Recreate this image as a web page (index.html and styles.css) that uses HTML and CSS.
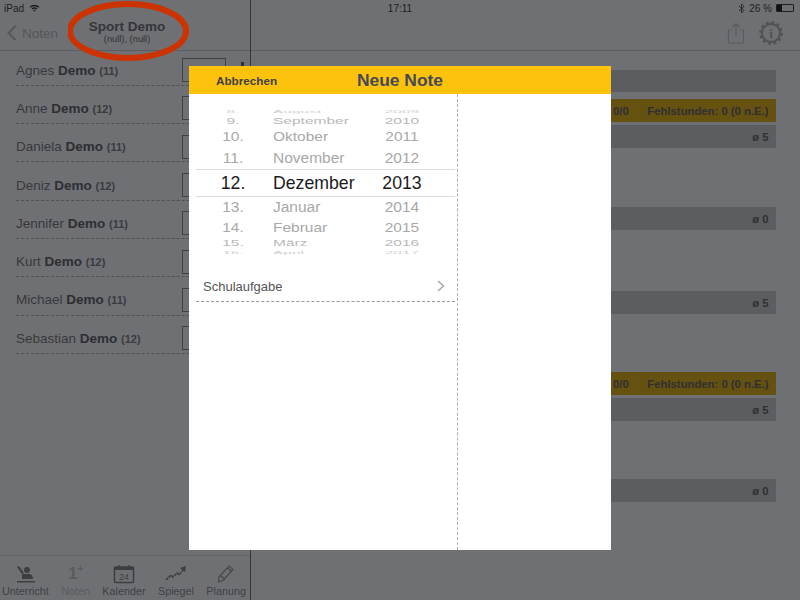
FILE: index.html
```html
<!DOCTYPE html>
<html lang="de">
<head>
  <meta charset="UTF-8" />
  <title>Neue Note</title>
  <link rel="stylesheet" href="styles.css">
</head>
<body>

<div class="screen">
  <div class="main">
    <div class="left">
      <div class="navbar">
        <div class="back">
          <svg width="10" height="16" viewBox="0 0 10 16"><path d="M8.5 1 L1.5 8 L8.5 15" fill="none" stroke="#55565a" stroke-width="2"/></svg>
          <span>Noten</span>
        </div>
        <div class="nav-title">
          <div class="nav-title-main">Sport Demo</div>
          <div class="nav-title-sub">(null), (null)</div>
        </div>
      </div>

      <div class="students">
        <div class="student"><span>Agnes <b>Demo</b> <small>(11)</small></span><div class="grade-box"></div></div>
        <div class="student"><span>Anne <b>Demo</b> <small>(12)</small></span><div class="grade-box"></div></div>
        <div class="student"><span>Daniela <b>Demo</b> <small>(11)</small></span><div class="grade-box"></div></div>
        <div class="student"><span>Deniz <b>Demo</b> <small>(12)</small></span><div class="grade-box"></div></div>
        <div class="student"><span>Jennifer <b>Demo</b> <small>(11)</small></span><div class="grade-box"></div></div>
        <div class="student"><span>Kurt <b>Demo</b> <small>(12)</small></span><div class="grade-box"></div></div>
        <div class="student"><span>Michael <b>Demo</b> <small>(11)</small></span><div class="grade-box"></div></div>
        <div class="student"><span>Sebastian <b>Demo</b> <small>(12)</small></span><div class="grade-box"></div></div>
      </div>

      <div class="tabbar">
        <div class="tab">
          <svg width="24" height="20" viewBox="0 0 24 20"><path d="M4 3 L6 2 L11 9 L9 10 Z M9 10 L17 10 Q20 11 20 15 H9 Z M4 17 H22 V18.5 H4 Z" fill="#3d3e42"/><circle cx="14" cy="6" r="3" fill="#3d3e42"/></svg>
          <span>Unterricht</span>
        </div>
        <div class="tab tab-off">
          <div class="one-plus">1<sup>+</sup></div>
          <span>Noten</span>
        </div>
        <div class="tab">
          <svg width="22" height="20" viewBox="0 0 22 20"><rect x="1.5" y="3" width="19" height="15.5" rx="1" fill="none" stroke="#3d3e42" stroke-width="1.5"/><rect x="1.5" y="3" width="19" height="3" fill="#3d3e42"/><path d="M6 1 V4 M16 1 V4" stroke="#3d3e42" stroke-width="1.5"/><text x="11" y="15.5" font-size="9" font-family="Liberation Sans" text-anchor="middle" fill="#3d3e42">24</text></svg>
          <span>Kalender</span>
        </div>
        <div class="tab">
          <svg width="22" height="20" viewBox="0 0 22 20"><path d="M1 16 L6 11 L8 13 L12 9 L14 11 L19 5" fill="none" stroke="#3d3e42" stroke-width="1.6" stroke-dasharray="3 0.8"/><path d="M15 4 L21 2 L20 8 Z" fill="#3d3e42"/></svg>
          <span>Spiegel</span>
        </div>
        <div class="tab">
          <svg width="20" height="20" viewBox="0 0 20 20"><path d="M3 13 L13 2 L17 5.5 L7 16.5 L2.5 18 Z M11.5 4 L15.5 7.5 M5 12 L9 15.5" fill="none" stroke="#47484c" stroke-width="1.2"/></svg>
          <span>Planung</span>
        </div>
      </div>
    </div>

    <div class="right">
      <div class="navbar navbar-right">
        <svg width="18" height="22" viewBox="0 0 18 22"><path d="M5.5 8 H1.5 V21 H16.5 V8 H12.5 M9 14 V1.5 M5.5 5 L9 1.5 L12.5 5" fill="none" stroke="#5b5c60" stroke-width="1.2"/></svg>
        <svg width="24" height="24" viewBox="0 0 24 24"><circle cx="12" cy="12" r="9" fill="none" stroke="#505155" stroke-width="2"/><circle cx="12" cy="12" r="10.8" fill="none" stroke="#505155" stroke-width="2" stroke-dasharray="3 2.65"/><text x="12" y="17" font-size="13" font-family="Liberation Serif" font-weight="bold" text-anchor="middle" fill="#505155">i</text></svg>
      </div>
      <div class="course-list">
        <div class="bar bar-first"></div>
        <div class="bar bar-gold"><span>0/0</span><span>Fehlstunden: 0 (0 n.E.)</span></div>
        <div class="bar">ø 5</div>
        <div class="bar bar-gap1">ø 0</div>
        <div class="bar bar-gap2">ø 5</div>
        <div class="bar bar-gold bar-gap3"><span>0/0</span><span>Fehlstunden: 0 (0 n.E.)</span></div>
        <div class="bar">ø 5</div>
        <div class="bar bar-gap3">ø 0</div>
      </div>
    </div>
  </div>

  <div class="statusbar">
    <div class="status-left">
      <span>iPad</span>
      <svg class="wifi" width="11" height="8" viewBox="0 0 12 9"><path d="M0.5 3 A8 8 0 0 1 11.5 3 L10.3 4.3 A6.2 6.2 0 0 0 1.7 4.3 Z M2.6 5.1 A5 5 0 0 1 9.4 5.1 L8.2 6.3 A3.3 3.3 0 0 0 3.8 6.3 Z M4.6 7.1 A2 2 0 0 1 7.4 7.1 L6 8.6 Z" fill="#1d1e20"/></svg>
    </div>
    <div class="status-time">17:11</div>
    <div class="status-right">
      <svg width="7" height="11" viewBox="0 0 7 11"><path d="M1 3 L6 7.5 L3.5 10 V1 L6 3.5 L1 8" fill="none" stroke="#2c2d30" stroke-width="1"/></svg>
      <span>26 %</span>
      <div class="battery"><div class="battery-level"></div></div>
    </div>
  </div>

  <!-- annotation drawn on the screenshot -->
  <svg class="ring" width="124" height="66" viewBox="0 0 124 66"><ellipse cx="60" cy="31" rx="58" ry="27" fill="none" stroke="#cc3300" stroke-width="6"/></svg>
  <div class="dot"></div>

  <div class="modal">
    <div class="modal-head">
      <div class="modal-cancel">Abbrechen</div>
      <div class="modal-title">Neue Note</div>
    </div>
    <div class="modal-body">
      <div class="modal-left">
        <div class="picker">
          <div class="pick pick-5"><span>8.</span><span>August</span><span>2009</span></div>
          <div class="pick pick-3"><span>9.</span><span>September</span><span>2010</span></div>
          <div class="pick pick-2"><span>10.</span><span>Oktober</span><span>2011</span></div>
          <div class="pick pick-1"><span>11.</span><span>November</span><span>2012</span></div>
          <div class="pick pick-now"><span>12.</span><span>Dezember</span><span>2013</span></div>
          <div class="pick pick-1"><span>13.</span><span>Januar</span><span>2014</span></div>
          <div class="pick pick-2"><span>14.</span><span>Februar</span><span>2015</span></div>
          <div class="pick pick-3"><span>15.</span><span>März</span><span>2016</span></div>
          <div class="pick pick-5"><span>16.</span><span>April</span><span>2017</span></div>
        </div>
        <div class="exam-type">
          <span>Schulaufgabe</span>
          <svg width="8" height="12" viewBox="0 0 8 12"><path d="M1 1 L6.5 6 L1 11" fill="none" stroke="#a9a9a9" stroke-width="1.6"/></svg>
        </div>
      </div>
      <div class="modal-right"></div>
    </div>
  </div>
</div>

</body>
</html>
```

FILE: styles.css
```css
* {
  box-sizing: border-box;
}

body {
  margin: 0;
  font-family: "Liberation Sans", Arial, sans-serif;
  color: #2f3034;
}

.screen {
  position: relative;
  width: 800px;
  height: 600px;
  overflow: hidden;
  background: #6f7074;
}

.statusbar {
  position: absolute;
  left: 0;
  top: 0;
  width: 100%;
  height: 16px;
  padding: 0 4px;
  display: grid;
  grid-template-columns: 1fr auto 1fr;
  align-items: center;
  font-size: 10px;
  color: #1d1e20;
}

.status-left {
  display: flex;
  align-items: center;
  gap: 5px;
}

.status-right {
  display: flex;
  align-items: center;
  justify-content: flex-end;
  gap: 4px;
}

.battery {
  width: 18px;
  height: 8px;
  border: 1px solid #1d1e20;
  border-radius: 1px;
  margin-right: 2px;
}

.battery-level {
  width: 5px;
  height: 100%;
  background: #111;
}

.main {
  display: flex;
  height: 600px;
}

.left {
  width: 251px;
  display: flex;
  flex-direction: column;
  border-right: 1px solid #36373a;
}

.right {
  flex: 1;
}

.navbar {
  height: 51px;
  padding-top: 16px;
  border-bottom: 1px solid #5c5d60;
  display: flex;
  align-items: center;
}

.back {
  display: flex;
  align-items: center;
  gap: 5px;
  padding-left: 7px;
  font-size: 13.5px;
  color: #55565a;
}

.nav-title {
  margin-left: 9px;
  width: 120px;
  margin-top: -2px;
  text-align: center;
}

.nav-title-main {
  font-size: 13.5px;
  font-weight: bold;
  color: #34353a;
  line-height: 14px;
}

.nav-title-sub {
  font-size: 9.3px;
  line-height: 10px;
  color: #2f3034;
}

.students {
  flex: 1;
  margin-top: -3.5px;
  padding-left: 16px;
}

.student {
  height: 38.3px;
  padding: 8px 24px 0 0;
  display: flex;
  align-items: center;
  justify-content: space-between;
  border-bottom: 1px dashed #505155;
  font-size: 13.5px;
  color: #37383c;
}

.student b {
  color: #2d2e33;
}

.student small {
  font-size: 11px;
  font-weight: bold;
  color: #3a3b3f;
}

.grade-box {
  width: 44px;
  height: 24px;
  border: 1px solid #3f4043;
}

.tabbar {
  height: 45px;
  border-top: 1px solid #5f6063;
  display: flex;
  justify-content: space-between;
  padding: 0 4px 0 2px;
}

.tab {
  display: flex;
  flex-direction: column;
  align-items: center;
  justify-content: flex-end;
  font-size: 10.8px;
  color: #3f4044;
  padding-bottom: 3px;
  gap: 1px;
}

.tab-off {
  color: #5a5b5f;
}

.one-plus {
  height: 20px;
  font-size: 17px;
  font-weight: bold;
  line-height: 20px;
}

.one-plus sup {
  font-size: 10px;
  line-height: 0;
}

.navbar-right {
  justify-content: flex-end;
  gap: 14px;
  padding-right: 17px;
}

.course-list {
  padding: 19px 24px 0 0;
}

.bar {
  height: 23px;
  background: #5c5d60;
  margin-top: 3px;
  padding-right: 7.5px;
  display: flex;
  align-items: center;
  justify-content: flex-end;
  font-size: 11.3px;
  font-weight: bold;
  color: #2f3034;
}

.bar-first {
  height: 22px;
  margin-top: 0;
}

.bar-gold {
  background: #655110;
  margin-top: 7px;
  justify-content: space-between;
  padding-left: 362px;
}

.bar-gap1 {
  margin-top: 59px;
}

.bar-gap2 {
  margin-top: 61px;
}

.bar-gap3 {
  margin-top: 58px;
}

.ring {
  position: absolute;
  left: 68px;
  top: 0;
}

.dot {
  position: absolute;
  left: 241px;
  top: 62px;
  width: 3px;
  height: 4px;
  background: #2f3034;
}

.modal {
  position: absolute;
  left: 189px;
  top: 66px;
  width: 422px;
  height: 484px;
  background: #fff;
  display: flex;
  flex-direction: column;
}

.modal-head {
  height: 28px;
  padding: 1px 0 0 27px;
  background: #fdc20b;
  display: grid;
  grid-template-columns: 141px 1fr;
  align-items: center;
}

.modal-cancel {
  font-size: 11.7px;
  font-weight: bold;
  color: #3e4149;
}

.modal-title {
  font-size: 17.4px;
  font-weight: bold;
  color: #44495a;
}

.modal-body {
  flex: 1;
  display: flex;
}

.modal-left {
  width: 269px;
  border-right: 1px dashed #b0b0b0;
  padding: 0 2px 0 7px;
}

.picker {
  height: 159px;
  padding-top: 14px;
}

.pick {
  display: grid;
  grid-template-columns: 74px 92px 80px;
  font-size: 15.5px;
  color: #a8a8a8;
}

.pick span:first-child,
.pick span:last-child {
  text-align: center;
}

.pick span:nth-child(2) {
  padding-left: 3px;
}

.pick-now {
  height: 28px;
  line-height: 26px;
  font-size: 17.7px;
  color: #1b1b1b;
  border-top: 1px solid #dcdcdc;
  border-bottom: 1px solid #dcdcdc;
}

.pick-now + .pick {
  margin-top: -2px;
}

.pick-1 {
  height: 23px;
  line-height: 23px;
}

.pick-2 {
  height: 19px;
  line-height: 19px;
  transform: scaleY(0.8);
}

.pick-3 {
  height: 12px;
  line-height: 12px;
  transform: scaleY(0.55);
  color: #b8b8b8;
}

.pick-5 {
  height: 7px;
  line-height: 7px;
  transform: scaleY(0.25);
  color: #cfcfcf;
}

.exam-type {
  height: 49px;
  padding: 18px 10px 0 7px;
  border-bottom: 1px dashed #9a9a9a;
  display: flex;
  justify-content: space-between;
  align-items: center;
  font-size: 13px;
  color: #555;
}

.modal-right {
  flex: 1;
}
```
